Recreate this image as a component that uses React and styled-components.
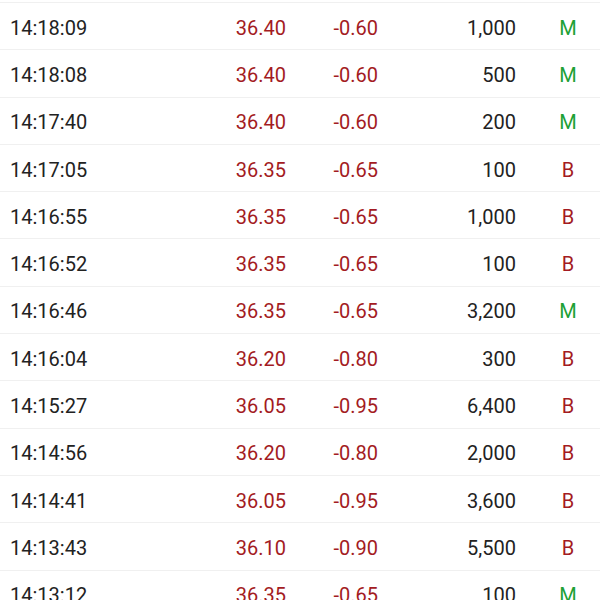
import styled, { createGlobalStyle } from 'styled-components';

const GlobalStyle = createGlobalStyle`
  body {
    margin: 0;
    background: #ffffff;
    font-family: Roboto, "Noto Sans", sans-serif;
  }
`;

const trades = [
  ['14:18:09', '36.40', '-0.60', '1,000', 'M'],
  ['14:18:08', '36.40', '-0.60', '500', 'M'],
  ['14:17:40', '36.40', '-0.60', '200', 'M'],
  ['14:17:05', '36.35', '-0.65', '100', 'B'],
  ['14:16:55', '36.35', '-0.65', '1,000', 'B'],
  ['14:16:52', '36.35', '-0.65', '100', 'B'],
  ['14:16:46', '36.35', '-0.65', '3,200', 'M'],
  ['14:16:04', '36.20', '-0.80', '300', 'B'],
  ['14:15:27', '36.05', '-0.95', '6,400', 'B'],
  ['14:14:56', '36.20', '-0.80', '2,000', 'B'],
  ['14:14:41', '36.05', '-0.95', '3,600', 'B'],
  ['14:13:43', '36.10', '-0.90', '5,500', 'B'],
  ['14:13:12', '36.35', '-0.65', '100', 'M'],
];

const List = styled.div`
  padding-top: 2px;
  height: 600px;
  overflow: hidden;
`;

const Row = styled.div`
  display: grid;
  grid-template-columns: 190px 86px 92px 138px 84px;
  align-items: center;
  height: 47.3px;
  box-sizing: border-box;
  padding: 3px 0 0 10px;
  border-top: 1px solid #f0f0f0;
  font-size: 20px;
  color: #222222;
`;

const Time = styled.span`
  text-align: left;
`;

const Num = styled.span`
  text-align: right;
  color: ${(p) => (p.$red ? '#a31b22' : '#222222')};
`;

const Side = styled.span`
  text-align: center;
  padding-left: 20px;
  color: ${(p) => (p.$side === 'M' ? '#20a035' : '#a31b22')};
`;

const App = () => {
  return (
    <>
      <GlobalStyle />
      <List>
        {trades.map((t, i) => (
          <Row key={i}>
            <Time>{t[0]}</Time>
            <Num $red>{t[1]}</Num>
            <Num $red>{t[2]}</Num>
            <Num>{t[3]}</Num>
            <Side $side={t[4]}>{t[4]}</Side>
          </Row>
        ))}
      </List>
    </>
  );
};

export default App;
